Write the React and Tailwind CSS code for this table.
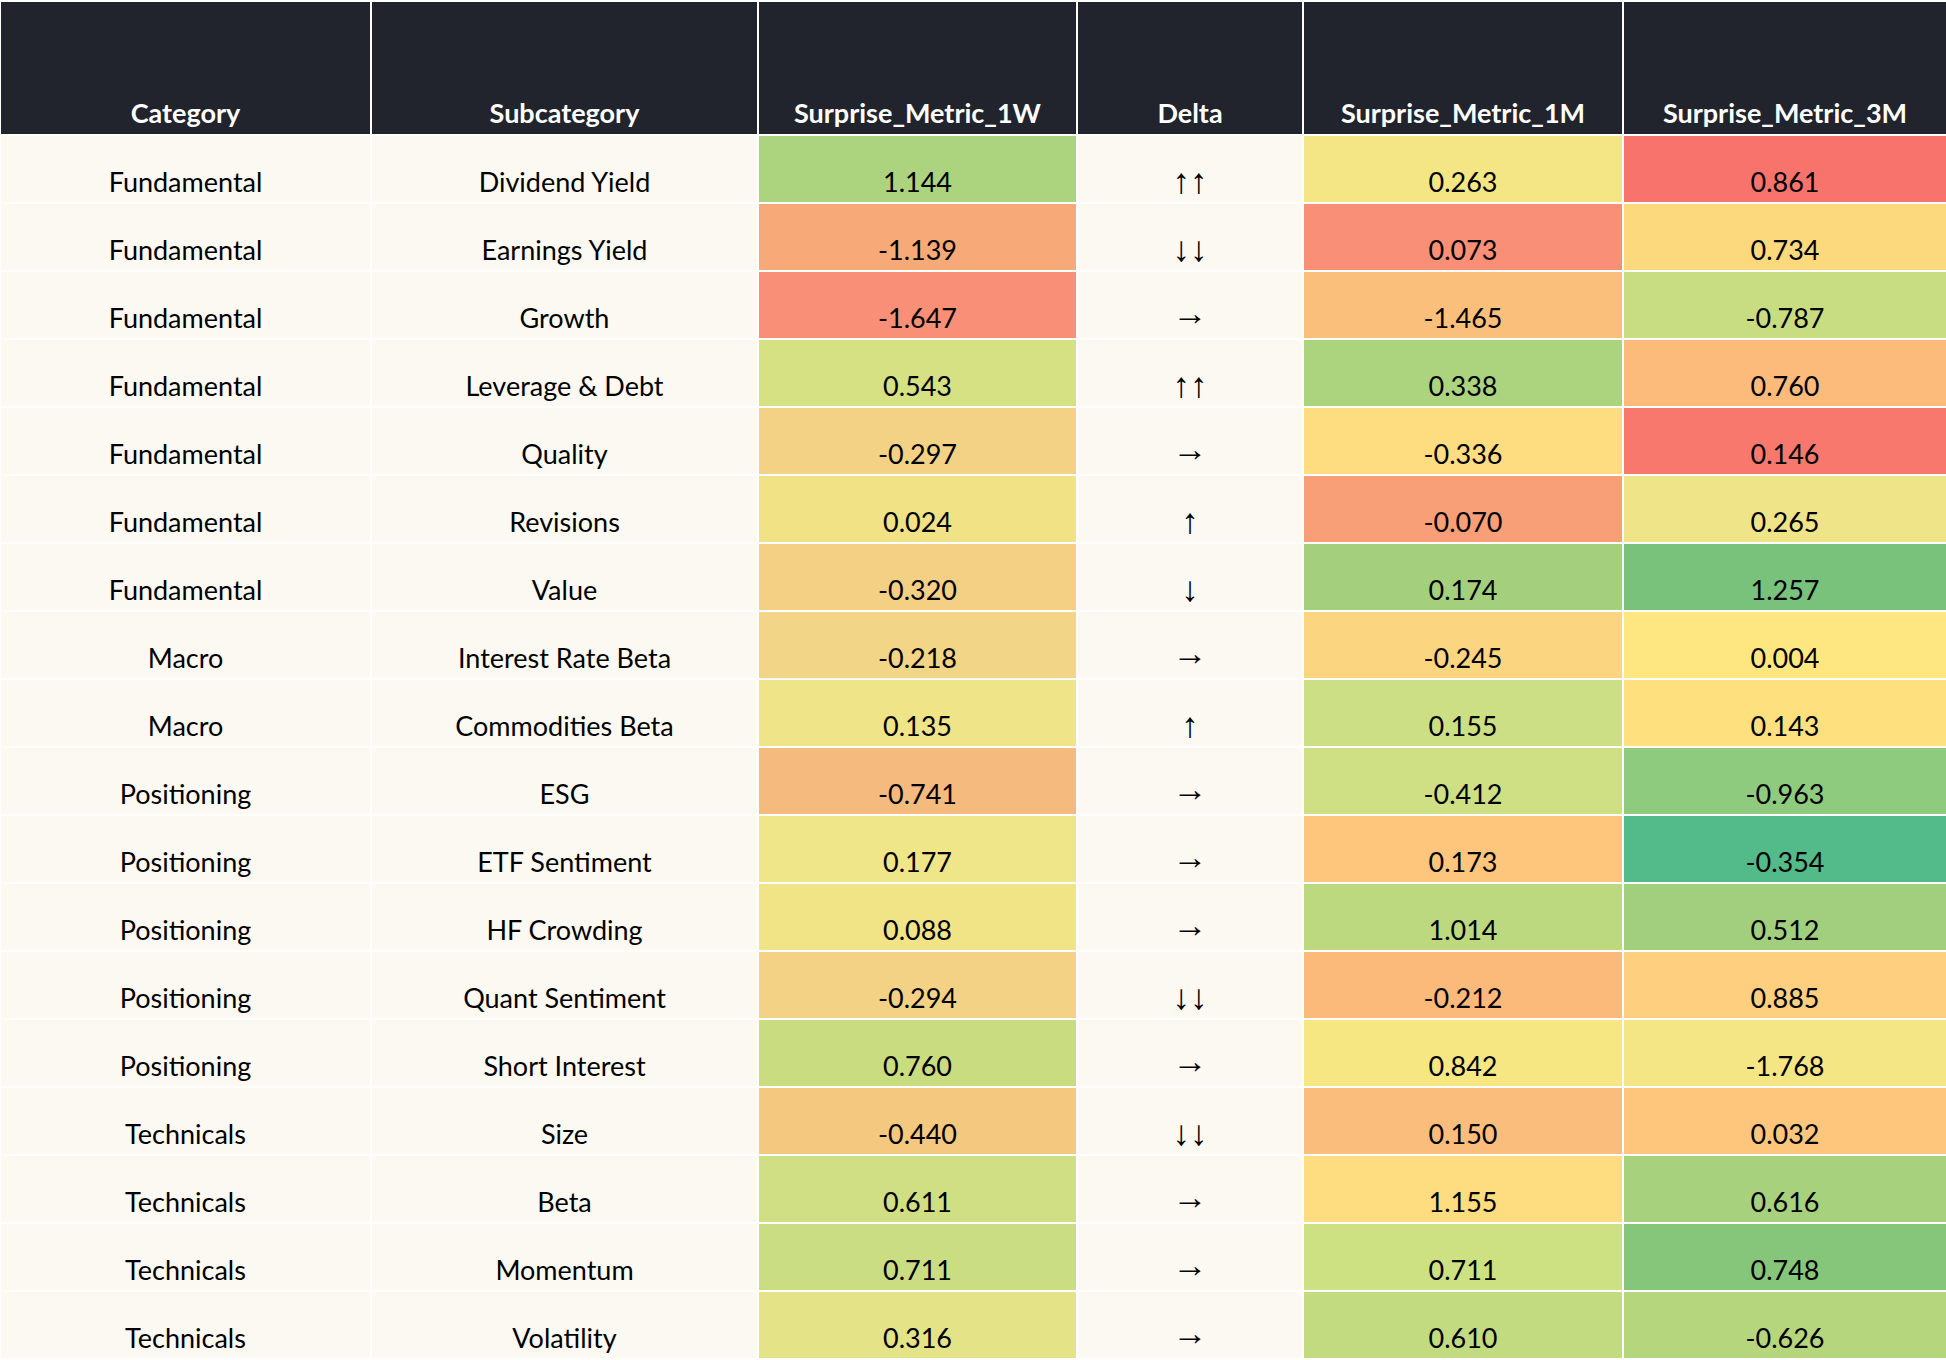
import React from "react";

const rows = [
  ["Fundamental", "Dividend Yield", ["1.144", "bg-[#acd47f]"], "↑↑", ["0.263", "bg-[#f4e684]"], ["0.861", "bg-[#f8736c]"]],
  ["Fundamental", "Earnings Yield", ["-1.139", "bg-[#f7a978]"], "↓↓", ["0.073", "bg-[#f88f76]"], ["0.734", "bg-[#fcd97c]"]],
  ["Fundamental", "Growth", ["-1.647", "bg-[#f88f76]"], "→", ["-1.465", "bg-[#fbbf7c]"], ["-0.787", "bg-[#c8dd81]"]],
  ["Fundamental", "Leverage & Debt", ["0.543", "bg-[#d6e184]"], "↑↑", ["0.338", "bg-[#acd47f]"], ["0.760", "bg-[#fcbb7a]"]],
  ["Fundamental", "Quality", ["-0.297", "bg-[#f3d285]"], "→", ["-0.336", "bg-[#fddd7f]"], ["0.146", "bg-[#f8786e]"]],
  ["Fundamental", "Revisions", ["0.024", "bg-[#f1e286]"], "↑", ["-0.070", "bg-[#f89f78]"], ["0.265", "bg-[#efe487]"]],
  ["Fundamental", "Value", ["-0.320", "bg-[#f3d084]"], "↓", ["0.174", "bg-[#a4d07d]"], ["1.257", "bg-[#78c27b]"]],
  ["Macro", "Interest Rate Beta", ["-0.218", "bg-[#f2d586]"], "→", ["-0.245", "bg-[#fcd580]"], ["0.004", "bg-[#fee680]"]],
  ["Macro", "Commodities Beta", ["0.135", "bg-[#f0e488]"], "↑", ["0.155", "bg-[#cddf84]"], ["0.143", "bg-[#fee07f]"]],
  ["Positioning", "ESG", ["-0.741", "bg-[#f5ba7d]"], "→", ["-0.412", "bg-[#cfe084]"], ["-0.963", "bg-[#8fcb7e]"]],
  ["Positioning", "ETF Sentiment", ["0.177", "bg-[#efe589]"], "→", ["0.173", "bg-[#fec67c]"], ["-0.354", "bg-[#53ba89]"]],
  ["Positioning", "HF Crowding", ["0.088", "bg-[#f0e487]"], "→", ["1.014", "bg-[#bcd97f]"], ["0.512", "bg-[#a2cf7d]"]],
  ["Positioning", "Quant Sentiment", ["-0.294", "bg-[#f3d285]"], "↓↓", ["-0.212", "bg-[#fbb97a]"], ["0.885", "bg-[#fdcf7e]"]],
  ["Positioning", "Short Interest", ["0.760", "bg-[#c9dc80]"], "→", ["0.842", "bg-[#f6e783]"], ["-1.768", "bg-[#f4e684]"]],
  ["Technicals", "Size", ["-0.440", "bg-[#f4c97f]"], "↓↓", ["0.150", "bg-[#fbbd7b]"], ["0.032", "bg-[#fdc67c]"]],
  ["Technicals", "Beta", ["0.611", "bg-[#d1df84]"], "→", ["1.155", "bg-[#fddd80]"], ["0.616", "bg-[#a8d17e]"]],
  ["Technicals", "Momentum", ["0.711", "bg-[#cbdd82]"], "→", ["0.711", "bg-[#cde082]"], ["0.748", "bg-[#86c67a]"]],
  ["Technicals", "Volatility", ["0.316", "bg-[#e4e388]"], "→", ["0.610", "bg-[#c3db80]"], ["-0.626", "bg-[#b6d67e]"]],
];

const headers = ["Category", "Subcategory", "Surprise_Metric_1W", "Delta", "Surprise_Metric_1M", "Surprise_Metric_3M"];

function Cell({ children, bg = "bg-[#fcf9f2]" }) {
  return (
    <div className={`flex items-end justify-center pb-[4px] text-[27px] leading-[32px] text-black ${bg}`}>
      {children}
    </div>
  );
}

export default function App() {
  return (
    <div className="w-[1946px] h-[1360px] overflow-hidden bg-white pt-[2px] pl-[1px] font-[family-name:Lato,DejaVu_Sans,sans-serif]">
      <div className="grid grid-cols-[369px_385px_317px_224px_318px_322px] grid-rows-[132px] auto-rows-[66px] gap-[2px]">
        {headers.map((h) => (
          <div
            key={h}
            className="flex items-end justify-center bg-[#21242c] pb-[5px] text-[27px] leading-[32px] font-bold text-white"
          >
            {h}
          </div>
        ))}
        {rows.map((r, i) => (
          <React.Fragment key={i}>
            <Cell>{r[0]}</Cell>
            <Cell>{r[1]}</Cell>
            <Cell bg={r[2][1]}>{r[2][0]}</Cell>
            <Cell>
              <span
                className={`${r[3] === "→" ? "mb-[5px]" : "mb-[1px]"} text-[35px] leading-[32px] font-[family-name:Liberation_Sans,DejaVu_Sans,sans-serif]`}
              >
                {r[3]}
              </span>
            </Cell>
            <Cell bg={r[4][1]}>{r[4][0]}</Cell>
            <Cell bg={r[5][1]}>{r[5][0]}</Cell>
          </React.Fragment>
        ))}
      </div>
    </div>
  );
}
